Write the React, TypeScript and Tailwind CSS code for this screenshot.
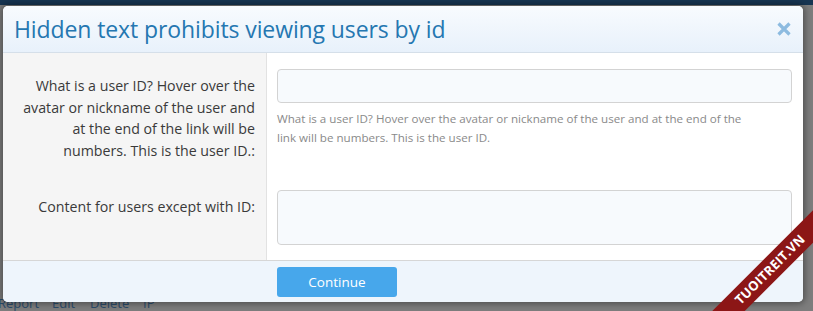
const labelFont = { fontFamily: '"Open Sans", "Noto Sans", Arial, sans-serif' };

const CloseIcon = () => (
  <svg width="16" height="16" viewBox="0 0 16 16" aria-hidden="true">
    <path d="M2.5 2.5 L13.5 13.5 M13.5 2.5 L2.5 13.5" stroke="#8dbbe0" strokeWidth="3.2" strokeLinecap="butt" />
  </svg>
);

export default function App() {
  return (
    <div
      className="relative w-[813px] h-[311px] overflow-hidden bg-[#7d7d7d]"
      style={labelFont}
    >
      {/* page behind the overlay */}
      <div className="h-[5px] bg-[#173552]" />
      <div className="flex pt-[291px] text-[13px] leading-[15px] text-[#2a4b6b] -ml-[2px]">
        <span className="w-[54px]">Report</span>
        <span className="w-[38px]">Edit</span>
        <span className="w-[53px]">Delete</span>
        <span>IP</span>
      </div>

      {/* dialog */}
      <div className="absolute left-[3px] top-[6px] w-[800px] h-[296px] flex flex-col rounded-[5px] overflow-hidden bg-white shadow-[0_0_6px_2px_rgba(0,0,0,0.35)]">
        <div className="h-[47px] shrink-0 flex items-center justify-between pl-[11px] pr-[11px] bg-gradient-to-b from-[#f8fbfe] to-[#e8f1fb] border-b border-[#d5dfe9]">
          <h2 className="text-[23px] leading-none text-[#2577b1] tracking-[-0.1px]">
            Hidden text prohibits viewing users by id
          </h2>
          <CloseIcon />
        </div>

        <div className="flex-1 flex flex-col border-b border-[#d6d6d6]">
          <div className="flex">
            <div className="w-[264px] shrink-0 bg-[#f5f5f5] border-r border-[#e2e2e2] pt-[22px] pb-[13px] pr-[11px] text-right text-[14.2px] leading-[21.5px] text-[#3a3a3a]">
              What is a user ID? Hover over the
              <br />
              avatar or nickname of the user and
              <br />
              at the end of the link will be
              <br />
              numbers. This is the user ID.:
            </div>
            <div className="flex-1 pt-[16px] pl-[10px] pr-[11px]">
              <div className="h-[34px] rounded-[4px] border border-[#d3d3d3] bg-[#f7fafd]" />
              <p className="mt-[6px] text-[11.6px] leading-[19px] text-[#8a8a8a]">
                What is a user ID? Hover over the avatar or nickname of the user and at the end of the
                <br />
                link will be numbers. This is the user ID.
              </p>
            </div>
          </div>
          <div className="flex flex-1">
            <div className="w-[264px] shrink-0 bg-[#f5f5f5] border-r border-[#e2e2e2] pt-[22px] pr-[11px] text-right text-[14.2px] leading-[21.5px] text-[#3a3a3a]">
              Content for users except with ID:
            </div>
            <div className="flex-1 pt-[16px] pl-[10px] pr-[11px]">
              <div className="h-[55px] rounded-[4px] border border-[#d3d3d3] bg-[#f7fafd]" />
            </div>
          </div>
        </div>

        <div className="h-[41px] shrink-0 bg-[#eef5fc] pl-[274px] pt-[6px]">
          <button className="w-[120px] h-[30px] rounded-[3px] bg-[#47a7eb] text-white text-[13.5px]">
            Continue
          </button>
        </div>
      </div>

      {/* watermark ribbon */}
      <div className="absolute left-[660px] top-[258px] w-[220px] h-[23px] -rotate-45 bg-[#8c1616] flex items-center justify-center">
        <span className="text-white text-[13px] font-bold tracking-[0.2px] leading-none">TUOITREIT.VN</span>
      </div>
    </div>
  );
}
